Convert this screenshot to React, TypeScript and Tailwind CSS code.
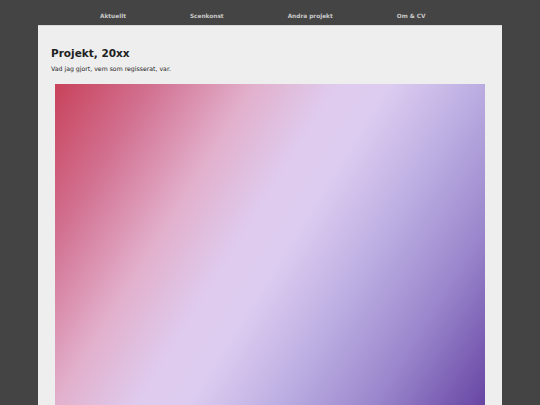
export default function App() {
  const links = ["Aktuellt", "Scenkonst", "Andra projekt", "Om & CV"];
  return (
    <div
      className="min-h-[405px] w-full bg-[#444444]"
      style={{ fontFamily: '"DejaVu Sans", Verdana, sans-serif' }}
    >
      <nav className="flex h-[25px] items-center gap-[64px] pl-[100px] pt-[8px]">
        {links.map((l) => (
          <a
            key={l}
            className="text-[5.8px] font-bold leading-[7px] text-[#c9c9c9]"
          >
            {l}
          </a>
        ))}
      </nav>
      <main className="mx-[38px] h-[380px] border-t border-[#d9d9d9] bg-[#eeeeee] px-[13px] pt-[21px]">
        <h1 className="text-[10.5px] font-bold leading-[13px] text-[#222222]">
          Projekt, 20xx
        </h1>
        <p className="mt-[5px] text-[6.2px] leading-[8px] text-[#222222]">
          Vad jag gjort, vem som regisserat, var.
        </p>
        <div
          className="mx-[4px] mt-[11px] h-[340px] bg-[linear-gradient(122deg,#c8425a_0%,#d27090_15%,#e2b0cc_31%,#dfcbee_44%,#ddccf0_52%,#bcaee2_66%,#9a86cc_81%,#6846a4_98%)]"
        />
      </main>
    </div>
  );
}
